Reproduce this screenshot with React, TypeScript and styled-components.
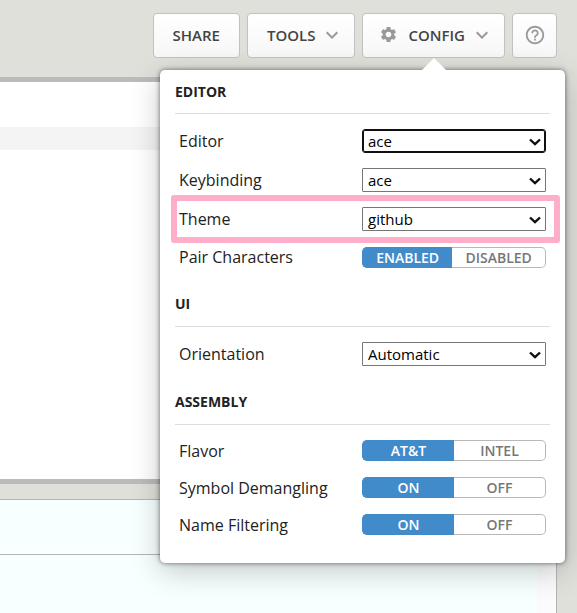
import React, { useId, useState } from "react";
import styled, { createGlobalStyle, css } from "styled-components";
import { MdExpandMore, MdHelpOutline, MdSettings } from "react-icons/md";

const GlobalStyle = createGlobalStyle`
  *, *::before, *::after { box-sizing: border-box; }
  body {
    margin: 0;
    background: #dfe0da;
    color: #222;
    font-family: "Open Sans", "Noto Sans", sans-serif;
    font-size: 16px;
  }
  button, select { font-family: inherit; margin: 0; }
`;

const Page = styled.div`
  display: flex;
  flex-direction: column;
  min-height: 100vh;
`;

const Toolbar = styled.header`
  position: relative;
  display: flex;
  justify-content: flex-end;
  gap: 7px;
  padding: 13px 20px 19px;
`;

const buttonPadding = {
  plain: "0 19px 2px",
  menu: "0 10px 2px 19px",
  iconMenu: "0 10px 2px 16px",
  square: "0 0 1px",
};

const ToolButton = styled.button<{ $kind: keyof typeof buttonPadding }>`
  display: flex;
  align-items: center;
  justify-content: center;
  min-width: 45px;
  height: 45px;
  padding: ${(p) => buttonPadding[p.$kind]};
  border: 1px solid #c2c2c0;
  border-radius: 4px;
  background: linear-gradient(#fff, #f7f7f7);
  color: #444;
  font-size: 15px;
  font-weight: 600;
  white-space: nowrap;
  cursor: pointer;

  svg { flex: none; color: #999; }
`;

const ButtonText = styled.span<{ $afterIcon?: boolean }>`
  margin-left: ${(p) => (p.$afterIcon ? "10px" : "0")};
  margin-right: 5px;
`;

const MenuAnchor = styled.div`
  position: relative;
`;

const Popover = styled.section`
  position: absolute;
  z-index: 2;
  top: 57px;
  right: -60px;
  width: 405px;
  padding: 11px 15px 27px;
  border-radius: 5px;
  background: #fff;
  box-shadow: 0 0 5px rgba(0, 0, 0, 0.55), 0 8px 30px rgba(0, 0, 0, 0.22);

  &::before {
    content: "";
    position: absolute;
    top: -12px;
    right: 119px;
    border: 12px solid transparent;
    border-top-width: 0;
    border-bottom-color: #fff;
  }
`;

const GroupTitle = styled.h2`
  margin: 0 0 15px;
  padding-bottom: 10px;
  border-bottom: 1px solid #ddd;
  font-size: 14px;
  line-height: 22px;
  font-weight: 700;
`;

const Group = styled.section`
  & + & { margin-top: 25px; }
  & + & ${GroupTitle} { padding-bottom: 11px; }
`;

const Rows = styled.div`
  display: flex;
  flex-direction: column;
  gap: 15px;
`;

const Row = styled.div<{ $marked?: boolean }>`
  position: relative;
  display: grid;
  grid-template-columns: 1fr 184px;
  align-items: center;
  padding: 0 4px;
  line-height: 22px;

  ${(p) =>
    p.$marked &&
    css`
      &::after {
        content: "";
        position: absolute;
        inset: -12px -10px -12px -4px;
        border: 6px solid #ffaec9;
        border-radius: 3px;
        pointer-events: none;
      }
    `}
`;

const SelectBox = styled.div`
  position: relative;
  height: 24px;
`;

const Select = styled.select<{ $active?: boolean }>`
  appearance: none;
  display: block;
  width: 100%;
  height: 24px;
  padding: 0 24px 0 5px;
  border: 1px solid ${(p) => (p.$active ? "#101010" : "#767676")};
  border-radius: ${(p) => (p.$active ? "3px" : "1px")};
  box-shadow: ${(p) => (p.$active ? "inset 0 0 0 1px #101010" : "none")};
  outline: none;
  background-color: #fff;
  color: #000;
  font-size: 15px;
  line-height: 22px;
`;

const SelectArrow = styled.svg`
  position: absolute;
  top: 9px;
  right: 5px;
  pointer-events: none;
`;

const Segmented = styled.div`
  display: flex;
  height: 21px;
`;

const Segment = styled.button<{ $on: boolean }>`
  flex: 1 1 auto;
  padding: 0 12px;
  border: 1px solid ${(p) => (p.$on ? "#428bca" : "#b8b8b8")};
  background: ${(p) => (p.$on ? "#428bca" : "#fff")};
  color: ${(p) => (p.$on ? "#fff" : "#777")};
  font-size: 14px;
  line-height: 19px;
  font-weight: 600;
  cursor: pointer;

  &:first-child { border-radius: 5px 0 0 5px; border-right: 0; }
  &:last-child { border-radius: 0 5px 5px 0; border-left: 0; }
`;

const EqualSegmented = styled(Segmented)`
  align-self: start;

  ${Segment} { flex: 1 1 0; }
`;

const Workspace = styled.main`
  display: flex;
  flex: 1;
  flex-direction: column;
  gap: 15px;
  margin-right: 20px;
`;

const CodePane = styled.section`
  flex: 1;
  padding-top: 45px;
  border: solid #bbb;
  border-width: 5px 1px 5px 0;
  background: #fff;
`;

const ActiveLine = styled.div`
  height: 23px;
  background: #f4f4f4;
`;

const OutputPane = styled.section`
  display: flex;
  flex: 0 0 114px;
  border: solid #b5b5b3;
  border-width: 1px 1px 0 0;
  background: #f8ffff;
`;

const OutputText = styled.div`
  flex: 1;
`;

const OutputHeader = styled.div`
  height: 55px;
  border-bottom: 1px solid #b5b5b3;
`;

const Gutter = styled.div`
  width: 19px;
  background: #fbfbfb;
`;

type SelectRowProps = { label: string; options: string[]; active?: boolean; marked?: boolean };

function SelectRow({ label, options, active, marked }: SelectRowProps) {
  const id = useId();
  return (
    <Row $marked={marked}>
      <label htmlFor={id}>{label}</label>
      <SelectBox>
        <Select id={id} $active={active}>
          {options.map((o) => (
            <option key={o}>{o}</option>
          ))}
        </Select>
        <SelectArrow width="12" height="8" viewBox="0 0 12 8" aria-hidden="true">
          <path d="M1 1.500 6 6.200l5-4.700" fill="none" stroke="#101010" strokeWidth="2.400" />
        </SelectArrow>
      </SelectBox>
    </Row>
  );
}

function ToggleRow({ label, options, fitted }: { label: string; options: string[]; fitted?: boolean }) {
  const id = useId();
  const [value, setValue] = useState(options[0]);
  const Box = fitted ? Segmented : EqualSegmented;
  return (
    <Row>
      <span id={id}>{label}</span>
      <Box role="group" aria-labelledby={id}>
        {options.map((o) => (
          <Segment key={o} type="button" $on={o === value} aria-pressed={o === value} onClick={() => setValue(o)}>
            {o}
          </Segment>
        ))}
      </Box>
    </Row>
  );
}

function ConfigPopover() {
  return (
    <Popover aria-label="Configuration">
      <Group>
        <GroupTitle>EDITOR</GroupTitle>
        <Rows>
          <SelectRow label="Editor" options={["ace"]} active />
          <SelectRow label="Keybinding" options={["ace"]} />
          <SelectRow label="Theme" options={["github"]} marked />
          <ToggleRow label="Pair Characters" options={["ENABLED", "DISABLED"]} fitted />
        </Rows>
      </Group>
      <Group>
        <GroupTitle>UI</GroupTitle>
        <Rows>
          <SelectRow label="Orientation" options={["Automatic"]} />
        </Rows>
      </Group>
      <Group>
        <GroupTitle>ASSEMBLY</GroupTitle>
        <Rows>
          <ToggleRow label="Flavor" options={["AT&T", "INTEL"]} />
          <ToggleRow label="Symbol Demangling" options={["ON", "OFF"]} />
          <ToggleRow label="Name Filtering" options={["ON", "OFF"]} />
        </Rows>
      </Group>
    </Popover>
  );
}

export default function App() {
  return (
    <Page>
      <GlobalStyle />
      <Toolbar>
        <ToolButton type="button" $kind="plain">SHARE</ToolButton>
        <ToolButton type="button" $kind="menu">
          <ButtonText>TOOLS</ButtonText>
          <MdExpandMore size={24} />
        </ToolButton>
        <MenuAnchor>
          <ToolButton type="button" $kind="iconMenu" aria-expanded="true">
            <MdSettings size={19} />
            <ButtonText $afterIcon>CONFIG</ButtonText>
            <MdExpandMore size={24} />
          </ToolButton>
          <ConfigPopover />
        </MenuAnchor>
        <ToolButton type="button" $kind="square" aria-label="Help">
          <MdHelpOutline size={22} />
        </ToolButton>
      </Toolbar>
      <Workspace>
        <CodePane>
          <ActiveLine />
        </CodePane>
        <OutputPane>
          <OutputText>
            <OutputHeader />
          </OutputText>
          <Gutter />
        </OutputPane>
      </Workspace>
    </Page>
  );
}
